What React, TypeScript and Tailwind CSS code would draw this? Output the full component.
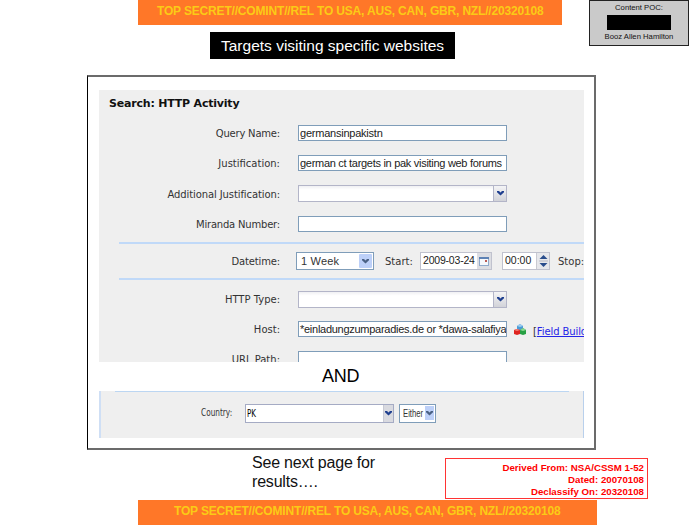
import type { ReactNode } from "react";

const ARIAL = "font-['Liberation_Sans',Arial,sans-serif]";
const VERDANA = "font-['DejaVu_Sans',Verdana,sans-serif]";

function Chevron({ color = "#1f3f8f" }: { color?: string }) {
  return (
    <svg width="7" height="5" viewBox="0 0 7 5">
      <path d="M0 0h2l1.500 1.500L5 0h2v1.200L3.500 4.600 0 1.200z" fill={color} />
    </svg>
  );
}

function Label({ children, className = "" }: { children: ReactNode; className?: string }) {
  return (
    <div className={`w-[181px] shrink-0 whitespace-nowrap pt-[2px] text-right text-[10px] leading-[14px] text-[#333] ${VERDANA} ${className}`}>
      {children}
    </div>
  );
}

function TextInput({ children }: { children?: ReactNode }) {
  return (
    <div className={`ml-[18px] h-4 w-[209px] shrink-0 overflow-hidden whitespace-nowrap border border-[#7f9db9] bg-white pl-px text-[11px] leading-[14px] text-[#222] ${ARIAL}`}>
      {children}
    </div>
  );
}

function Combo() {
  return (
    <div className="ml-[18px] flex h-[17px] w-[209px] shrink-0 border border-[#b3b5c8] bg-linear-to-b from-[#f0f0f3] from-0% to-white to-25%">
      <div className="flex-1" />
      <div className="flex w-[13px] items-center justify-center border-l border-[#b3b5c8] bg-linear-to-b from-[#f4f4f6] to-[#d2d3d9]">
        <Chevron />
      </div>
    </div>
  );
}

function Cubes() {
  return (
    <svg width="12" height="11" viewBox="0 0 12 11">
      <path d="M3 2l3-2 3 2v4L6 7 3 6z" fill="#4b9bd6" />
      <path d="M3 2l3-2 3 2-3 1z" fill="#9ccdf0" />
      <path d="M0 6l3-1 3 1v4l-3 1-3-1z" fill="#df2420" />
      <path d="M0 6l3-1 3 1-3 1z" fill="#f48378" />
      <path d="M6 6l3-2 3 2v4l-3 1-3-1z" fill="#26a043" />
      <path d="M6 6l3-2 3 2-3 1z" fill="#8bd891" />
    </svg>
  );
}

function SearchPanel() {
  return (
    <section className="ml-[11px] mt-[13px] h-[272px] w-[485px] shrink-0 overflow-hidden bg-[#efefef]">
      <h2 className={`h-7 pl-[10px] pt-[6px] text-[11px] font-bold leading-[15px] tracking-[-0.2px] text-[#111] ${VERDANA}`}>
        Search: HTTP Activity
      </h2>
      <div className="flex h-[30px] items-center">
        <Label className="tracking-[-0.2px]">Query Name:</Label>
        <TextInput><span className="tracking-[-0.23px]">germansinpakistn</span></TextInput>
      </div>
      <div className="flex h-[30px] items-center">
        <Label>Justification:</Label>
        <TextInput><span className="tracking-[-0.29px]">german ct targets in pak visiting web forums</span></TextInput>
      </div>
      <div className="flex h-[31px] items-center">
        <Label className="tracking-[-0.1px]">Additional Justification:</Label>
        <Combo />
      </div>
      <div className="flex h-[30px] items-center">
        <Label className="tracking-[-0.2px]">Miranda Number:</Label>
        <TextInput />
      </div>
      <div className="ml-5 mt-[3px] h-[2px] bg-[#c0d9f8]" />
      <div className="flex h-[34px] items-center">
        <Label className="tracking-[-0.15px]">Datetime:</Label>
        <div className={`ml-4 flex h-[18px] w-[78px] shrink-0 items-center border border-[#7f9db9] bg-white pl-1 pr-px text-[11px] text-[#333] ${ARIAL}`}>
          <span className="flex-1 whitespace-nowrap tracking-[0.2px]">1 Week</span>
          <span className="flex h-[14px] w-[13px] items-center justify-center rounded-[1px] bg-[#bdd0f8]"><Chevron color="#4a6184" /></span>
        </div>
        <div className={`ml-[11px] w-[35px] shrink-0 whitespace-nowrap text-[10px] text-[#333] ${VERDANA}`}>Start:</div>
        <div className={`flex h-[18px] w-[72px] shrink-0 items-center border border-[#c0c2ce] bg-white pl-[2px] text-[10.5px] text-[#222] ${ARIAL}`}>
          <span className="flex-1 whitespace-nowrap tracking-[-0.2px]">2009-03-24</span>
          <span className="flex h-4 w-[14px] items-center justify-center bg-[#dcdde2]">
            <svg width="10" height="9" viewBox="0 0 10 9" shapeRendering="crispEdges">
              <path d="M0 0h10v9H0z" fill="#8fa9cb" />
              <path d="M0 0h10v2H0z" fill="#5d82b4" />
              <path d="M1 2h8v6H1z" fill="#f6f8fb" />
              <path d="M6 3h2v2H6z" fill="#bc5b55" />
            </svg>
          </span>
        </div>
        <div className={`ml-[10px] flex h-[18px] w-[48px] shrink-0 items-center border border-[#c0c2ce] bg-white pl-[2px] text-[10.5px] text-[#222] ${ARIAL}`}>
          <span className="flex-1 whitespace-nowrap">00:00</span>
          <span className="flex h-4 w-[13px] items-center justify-center border-l border-[#c9cad1] bg-[#e6e7eb]">
            <svg width="9" height="14" viewBox="0 0 9 14">
              <path d="M0.500 5l4-4 4 4zM0.500 9l4 4 4-4z" fill="#294d8c" />
              <path d="M0 7h9" stroke="#b7b9c4" />
            </svg>
          </span>
        </div>
        <div className={`ml-2 shrink-0 whitespace-nowrap text-[10px] text-[#333] ${VERDANA}`}>Stop:</div>
      </div>
      <div className="ml-5 h-[2px] bg-[#c0d9f8]" />
      <div className="mt-1 flex h-[30px] items-center">
        <Label>HTTP Type:</Label>
        <Combo />
      </div>
      <div className="flex h-[30px] items-center">
        <Label>Host:</Label>
        <TextInput><span className="tracking-[-0.27px]">*einladungzumparadies.de or *dawa-salafiya</span></TextInput>
        <span className="ml-[7px] shrink-0"><Cubes /></span>
        <span className={`ml-[7px] mt-1 shrink-0 whitespace-nowrap text-[10px] tracking-[-0.1px] text-[#333] ${VERDANA}`}>
          [<span className="text-[#2525e8] underline">Field Builder</span>]
        </span>
      </div>
      <div className="flex h-[30px] items-center">
        <Label>URL Path:</Label>
        <TextInput />
      </div>
    </section>
  );
}

function CountryPanel() {
  return (
    <section className="ml-[11px] flex h-[47px] w-[485px] shrink-0 flex-col border-l-2 border-r border-l-[#cfdff5] border-r-[#b9d0ec] bg-[#efefef]">
      <div className="ml-[14px] h-px w-[454px] shrink-0 bg-[#bcd6f2]" />
      <div className={`flex h-[42px] items-center text-[10.5px] text-[#333] ${VERDANA}`}>
        <div className="ml-[100px] w-[44px] shrink-0">
          <span className="inline-block origin-left scale-x-[0.7] whitespace-nowrap">Country:</span>
        </div>
        <div className="flex h-[19px] w-[149px] shrink-0 border border-[#a5abc4] bg-white">
          <span className="w-[137px] pl-px leading-4 text-black"><span className="inline-block origin-left scale-x-[0.68]">PK</span></span>
          <span className="flex w-[10px] shrink-0 items-center justify-center border-l border-[#c8cad4] bg-[#d9dae0]"><Chevron /></span>
        </div>
        <div className="ml-[5px] flex h-[19px] w-[37px] shrink-0 items-center border border-[#7f9db9] bg-white pl-[3px]">
          <span className="w-[22px]"><span className={`inline-block origin-left scale-x-[0.7] whitespace-nowrap text-[11px] ${ARIAL}`}>Either</span></span>
          <span className="flex h-[14px] w-[9px] shrink-0 items-center justify-center bg-[#bdd0f8]"><Chevron color="#4a6184" /></span>
        </div>
      </div>
    </section>
  );
}

export default function App() {
  return (
    <div className={`flex h-[525px] w-[700px] flex-col overflow-hidden bg-white ${ARIAL}`}>
      <header className="flex h-[75px] shrink-0 items-start">
        <div className="w-[589px] shrink-0">
          <div className="ml-[138px] h-[25px] w-[424px] whitespace-nowrap bg-[#ff7728] pl-[19px] text-[12px] font-bold leading-[22px] tracking-[-0.17px] text-[#fbcb16]">
            TOP SECRET//COMINT//REL TO USA, AUS, CAN, GBR, NZL//20320108
          </div>
          <h1 className="ml-[210px] mt-[7px] h-[27px] w-[245px] whitespace-nowrap bg-black pl-[11px] text-[15.5px] leading-[27px] text-white">
            Targets visiting specific websites
          </h1>
        </div>
        <div className="flex h-[46px] w-[100px] shrink-0 flex-col items-center border border-[#222] bg-[#cacaca] text-[7.7px] leading-[9px] text-[#111]">
          <span className="mt-[2px] whitespace-nowrap">Content POC:</span>
          <div className="mt-[3px] h-[15px] w-[64px] shrink-0 bg-black" />
          <span className="mt-[2px] whitespace-nowrap">Booz Allen Hamilton</span>
        </div>
      </header>

      <main className="ml-[87px] flex h-[375px] w-[509px] shrink-0 flex-col border-2 border-l border-[#6b6b6b] border-l-black">
        <SearchPanel />
        <div className="h-[29px] shrink-0 pl-[234px] text-[18px] leading-[29px] tracking-[-0.2px] text-black">AND</div>
        <CountryPanel />
      </main>

      <div className="flex h-[50px] shrink-0 items-start">
        <p className="ml-[252px] mt-[3px] w-[193px] shrink-0 text-[16px] leading-[19px] tracking-[-0.2px] text-[#111]">
          See next page for
          <br />
          results….
        </p>
        <div className="mt-[8px] h-[41px] w-[203px] shrink-0 whitespace-nowrap border border-[#f33] bg-white pr-[3px] pt-[3px] text-right text-[9.7px] font-bold leading-[11.8px] text-[#f00]">
          <div>Derived From: NSA/CSSM 1-52</div>
          <div>Dated: 20070108</div>
          <div>Declassify On: 20320108</div>
        </div>
      </div>
      <footer className="ml-[138px] h-[25px] w-[459px] shrink-0 whitespace-nowrap bg-[#ff7728] pl-[36px] text-[12px] font-bold leading-[22px] tracking-[-0.17px] text-[#fbcb16]">
        TOP SECRET//COMINT//REL TO USA, AUS, CAN, GBR, NZL//20320108
      </footer>
    </div>
  );
}
